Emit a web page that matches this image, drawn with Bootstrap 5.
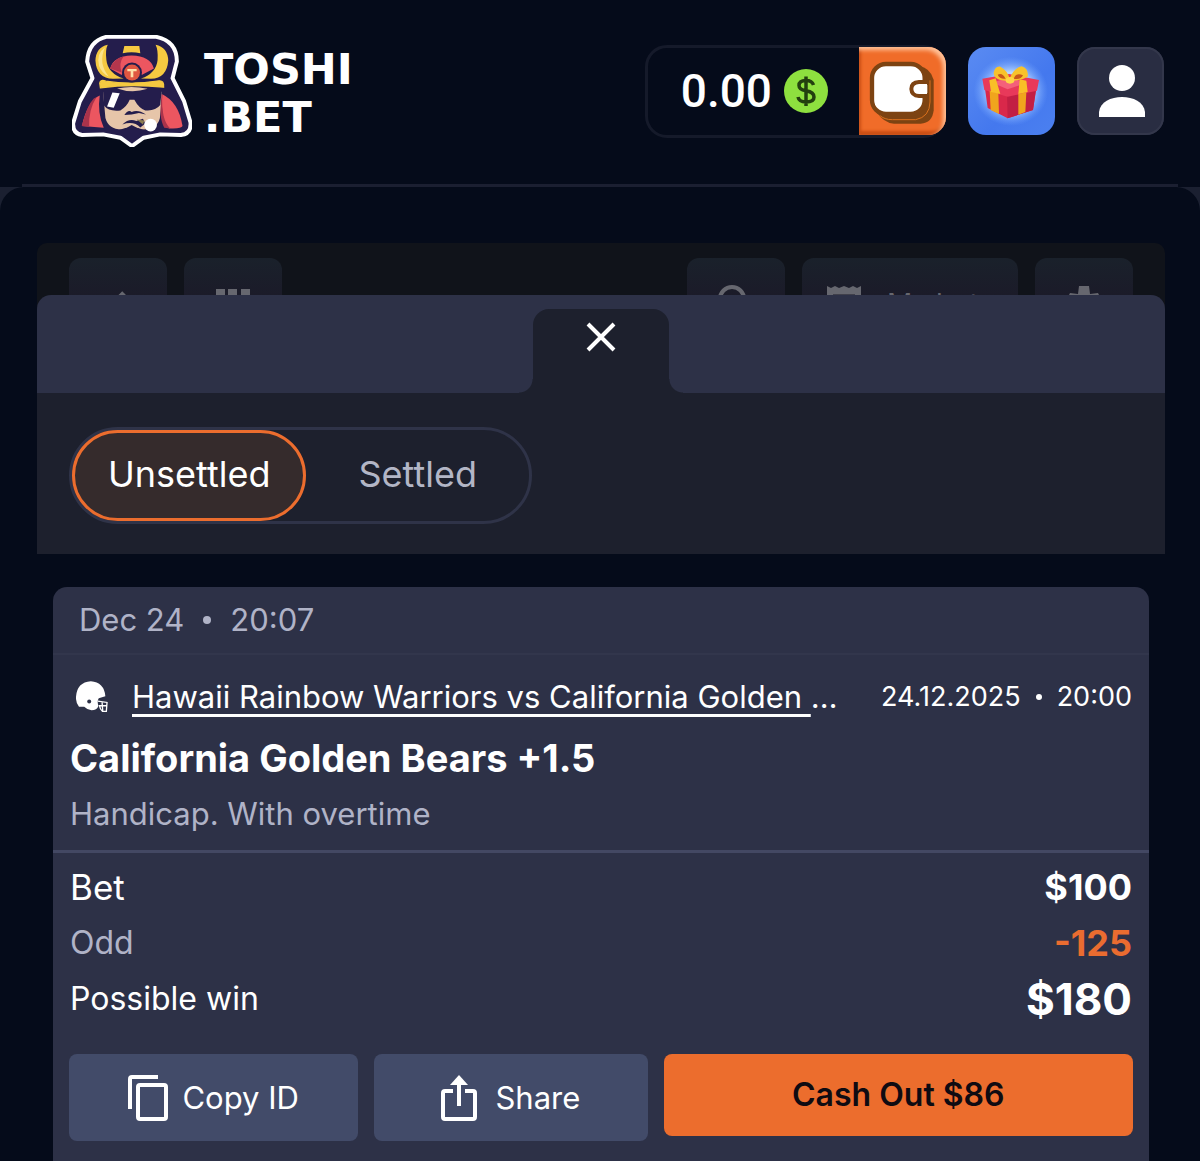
<!DOCTYPE html>
<html lang="en">
<head>
<meta charset="utf-8">
<meta name="viewport" content="width=device-width, initial-scale=1">
<title>Toshi.bet – My bets</title>
<link href="https://cdn.jsdelivr.net/npm/bootstrap@5.3.0/dist/css/bootstrap.min.css" rel="stylesheet">
<style>
  body { background: #050b1a; color: #fff; font-family: Inter, Roboto, sans-serif; font-size: 32px; line-height: 40px; }
  svg { display: block; flex: none; }
  .top-bar { height: 184px; padding: 0 36px 2px 72px; }
  .brand { gap: 12px; }
  .brand-name { font: 700 43px/48px "DejaVu Sans", sans-serif; color: #fff; padding-top: 4px; }
  .top-actions { gap: 22px; }
  .wallet-box { height: 93px; border: 3px solid #151a2a; border-radius: 22px; }
  .amount { font: 500 46px/48px Roboto, sans-serif; padding-left: 33px; }
  .coin { margin: 0 31px 0 12px; }
  .tile { width: 87px; height: 88px; padding: 0; border: 0; border-radius: 18px; display: flex; align-items: center; justify-content: center; overflow: hidden; }
  .tile-wallet { margin-right: -3px; border-radius: 0 18px 18px 0; background: #f06c29; box-shadow: inset -3px 3px 4px #ffc39a, inset 2px -4px 3px #c94d14; }
  .tile-gift { background: linear-gradient(135deg, #5a8bf2, #4478ee 60%, #4b80f0); }
  .tile-user { background: #292d42; box-shadow: inset 0 0 0 2px #33374b; }
  .head-line { height: 3px; margin: 0 22px; background: #1b1f31; }
  .page-back { background: #1b2031; }
  .page-main { background: #050b1a; border-radius: 24px 24px 0 0; padding: 56px 35px 0 37px; }
  .tool-strip { height: 68px; background: #10131a; padding: 15px 32px 0; overflow: hidden; color: #66676f; border-radius: 10px 10px 0 0; }
  .tool-set { gap: 17px; }
  .tool-btn { width: 98px; height: 76px; padding: 27px 0 0; border: 0; border-radius: 12px; background: linear-gradient(#1a212b, #1b1b29 37px); color: inherit; display: flex; align-items: flex-start; justify-content: center; }
  .tool-wide { width: 216px; gap: 26px; font-size: 28px; line-height: 32px; }
  .tool-wide span { padding-top: 3px; }
  .sheet { position: relative; margin-top: -16px; }
  .sheet-head { height: 98px; background: #2d3147; border-radius: 14px 14px 0 0; display: flex; justify-content: center; align-items: flex-end; }
  .close-tab { position: relative; width: 136px; height: 84px; border: 0; padding: 13px 0 0; background: #1d202d; border-radius: 16px 16px 0 0; display: flex; justify-content: center; }
  .close-tab::before, .close-tab::after { content: ""; position: absolute; bottom: 0; width: 14px; height: 14px; }
  .close-tab::before { right: 100%; background: radial-gradient(circle at 0 0, #2d3147 13px, #1d202d 14px); }
  .close-tab::after { left: 100%; background: radial-gradient(circle at 100% 0, #2d3147 13px, #1d202d 14px); }
  .filter-bar { background: #1d202d; padding: 34px 32px 30px; }
  .filter-group { border: 3px solid #2f3348; border-radius: 50px; height: 97px; }
  .filter-btn { border: 3px solid transparent; border-radius: 50px; background: none; color: #b3b6c6; font-size: 36px; line-height: 40px; height: 91px; padding: 0 49px 3px; }
  .filter-btn.active { background: #352b2c; border-color: #ec6d2e; color: #fff; padding: 0 33px 3px; }
  .bet-card { background: #2d3147; border-radius: 14px 14px 0 0; margin: 33px 16px 0; }
  .soft { color: #b0b3c7; }
  .bet-date { height: 68px; font-size: 31px; padding: 0 26px; border-bottom: 2px solid #32364c; gap: 19px; }
  .dot { width: 8px; height: 8px; border-radius: 50%; background: currentColor; flex: none; }
  .bet-body { font-size: 31px; padding: 22px 17px 16px; border-bottom: 3px solid #434863; }
  .event-row { padding-left: 6px; gap: 24px; }
  .event-name a { color: #fff; text-decoration: underline; text-decoration-thickness: 3px; text-underline-offset: 6px; }
  .event-time { font-size: 27px; gap: 15px; }
  .event-time .dot { width: 6px; height: 6px; }
  .pick { font-size: 38px; line-height: 48px; font-weight: 700; margin: 17px 0 12px; }
  .totals { padding: 6px 17px 0; }
  .totals dt { font-weight: 400; }
  .totals dt.stake { font-size: 35px; }
  .totals dd { margin: 0; font-weight: 700; font-size: 36px; }
  .total-line { height: 56px; }
  .orange { color: #ea6c30; }
  .totals dd.win { font-size: 44px; }
  .actions { padding: 27px 16px 20px; gap: 16px; }
  .act { border: 0; border-radius: 8px; height: 87px; font-size: 31px; color: #fff; background: #424b69; display: flex; align-items: center; justify-content: center; gap: 14px; flex: 289 1 0; padding: 0; }
  .act-share { flex-grow: 273; gap: 18px; }
  .act-cash { flex-grow: 469; background: #ec6d2d; color: #0f0b12; font-size: 32px; font-weight: 600; height: 82px; }
</style>
</head>
<body>
<header class="top-bar d-flex align-items-center justify-content-between">
  <a href="#" class="brand d-flex align-items-center text-decoration-none">
    <svg width="120" height="112" viewBox="35 35 360 337" aria-hidden="true">
      <path d="M140 40H285Q350 52 350 115L337 165L372 235L391 298Q394 332 362 336L300 334L250 344L215 369L180 344L128 334L65 336Q36 332 38 300L58 235L96 165L80 115Q84 52 140 40Z" fill="#241d4c" stroke="#fff" stroke-width="12" stroke-linejoin="round"/>
      <path d="M118 217Q82 232 64 309L130 314Q110 270 118 217Z" fill="#ec5660"/><path d="M100 226Q80 246 64 309L86 311Q84 260 108 222Z" fill="#a9334b"/>
      <path d="M306 213Q356 237 367 309Q364 318 326 316Q300 290 306 213Z" fill="#ec5660"/><path d="M306 213Q302 290 330 316L312 314Q296 285 300 213Z" fill="#a9334b"/>
      <path d="M128 206Q210 188 304 206L299 285Q290 322 240 319L214 306L190 319Q145 322 135 285Z" fill="#e6c5a9"/>
      <path d="M128 206Q120 175 214 190Q310 175 304 206L300 246Q285 265 255 262Q236 256 222 230L208 230Q200 250 180 262Q145 266 131 248Z" fill="#241d4c"/>
      <path d="M170 196Q215 186 262 197Q215 212 170 196Z" fill="#e6c5a9"/>
      <path d="M156 208L178 210L160 254L140 250Z" fill="#fff"/>
      <path d="M192 276Q204 258 214 267Q232 258 257 274L236 270Q214 276 192 276Z" fill="#241d4c"/>
      <path d="M186 304Q207 284 228 294L248 287L255 301L240 313Q220 292 186 304Z" fill="#241d4c"/>
      <path d="M229 289L252 292L248 304Z" fill="#8b7d50"/>
      <path d="M176 321Q214 306 252 321L215 354Z" fill="#241d4c"/>
      <path d="M149 136Q160 98 214 97Q270 98 281 136L244 155Q214 96 184 155Z" fill="#ec5660"/>
      <path d="M149 136Q160 106 190 99Q174 120 184 148Z" fill="#b3364d"/>
      <path d="M142 64Q106 72 105 112Q108 166 158 167L190 166Q142 150 138 110Q134 80 142 64Z" fill="#f5c941"/>
      <path d="M134 72Q106 92 116 128Q124 150 145 160Q112 120 134 72Z" fill="#fbe38b"/>
      <path d="M286 64Q323 72 324 112Q320 166 272 167L242 166Q288 150 292 110Q294 80 286 64Z" fill="#f5c941"/>
      <path d="M192 68H237L240 90Q214 84 187 90Z" fill="#f5c941"/>
      <path d="M118 180Q120 168 136 174Q212 186 296 173Q312 171 310 192Q212 181 120 194Z" fill="#f5c941" stroke="#f5c941" stroke-width="4"/>
      <circle cx="215" cy="148" r="30" fill="#241d4c"/><circle cx="215" cy="148" r="24" fill="#e05741"/><path d="M201 137H229V144H219V162H211V144H201Z" fill="#ffe0aa"/>
      <circle cx="271" cy="306" r="19" fill="#fff"/>
    </svg>
    <span class="brand-name">TOSHI<br>.BET</span>
  </a>
  <div class="top-actions d-flex align-items-center">
    <div class="wallet-box d-flex align-items-center">
      <span class="amount">0.00</span>
      <svg class="coin" width="44" height="44" viewBox="0 0 44 44" aria-label="US dollars"><circle cx="22" cy="22" r="22" fill="#8ee03f"/><path d="M29.500 16Q28 11.500 22 11.500Q15 11.500 15 16.500Q15 20.500 22 21.800Q30 23.200 30 28Q30 33 22 33Q15 33 14 28M22 7.500V37" fill="none" stroke="#23400f" stroke-width="3.500"/></svg>
      <button class="tile tile-wallet" aria-label="Wallet">
        <svg width="87" height="88" viewBox="0 0 261 264">
          <path d="M75 58H180Q213 62 224 98V190Q220 228 185 230H105Q75 228 52 194Z" fill="#7d4312"/>
          <path d="M62 205Q76 218 100 218H170Q212 210 213 165V100" fill="none" stroke="#d9701d" stroke-width="3"/>
          <rect x="39" y="51" width="158" height="150" rx="42" fill="#fff" stroke="#7d4312" stroke-width="13"/>
          <path d="M204 105H180Q157 106 157 126Q158 146 180 147H204" fill="#fff" stroke="#7d4312" stroke-width="12"/>
          <path d="M176 114H205V138H176Q166 126 176 114Z" fill="#fff"/>
        </svg>
      </button>
    </div>
    <button class="tile tile-gift" aria-label="Gifts">
      <svg width="87" height="88" viewBox="39 51 261 264">
        <defs><radialGradient id="glow"><stop offset=".55" stop-color="#b7d6ff"/><stop offset="1" stop-color="#6fa3ff" stop-opacity="0"/></radialGradient></defs>
        <ellipse cx="167" cy="184" rx="112" ry="104" fill="url(#glow)"/>
        <path d="M90 176L156 194L244 176L234 240L158 265L98 234Z" fill="#d9284a"/>
        <path d="M156 190L244 170L234 240L158 265Z" fill="#c21f43"/>
        <path d="M82 146L162 132L252 150L246 182L158 200L88 180Z" fill="#e8395a"/>
        <path d="M112 158L162 142L216 158L158 178Z" fill="#f4607a"/>
        <path d="M104 182L130 190L132 252L107 240ZM190 192L214 187L211 246L190 254Z" fill="#f0a51d"/>
        <path d="M103 151L122 145L136 192L108 186ZM194 148L214 152L218 186L190 192Z" fill="#f9bf27"/>
        <path d="M160 152Q116 152 116 128Q120 108 136 110Q158 122 164 146Q176 114 200 109Q222 116 218 140Q200 152 170 152Z" fill="#f8c22c"/>
        <path d="M128 134Q142 126 152 146Q134 148 128 134ZM176 146Q184 126 204 136Q198 150 176 146Z" fill="#c9571a"/>
        <ellipse cx="165" cy="151" rx="13" ry="10" fill="#ffd447"/>
      </svg>
    </button>
    <button class="tile tile-user" aria-label="Account">
      <svg width="48" height="52" viewBox="0 0 48 52"><circle cx="25" cy="13" r="13" fill="#fff"/><path d="M2 52V47C4 27 46 27 48 47V52Z" fill="#fff"/></svg>
    </button>
  </div>
</header>
<div class="head-line"></div>
<div class="page-back">
<main class="page-main">
  <div class="tool-strip d-flex justify-content-between">
    <div class="tool-set d-flex">
      <button class="tool-btn" aria-label="Back"><svg width="36" height="32" viewBox="0 0 36 32"><path d="M24 8L12 20L24 32" fill="none" stroke="currentColor" stroke-width="5"/></svg></button>
      <button class="tool-btn" aria-label="Menu"><svg width="34" height="34" viewBox="0 0 34 34" fill="currentColor"><path d="M0 4H9V13H0ZM12 4H21V13H12ZM25 4H34V13H25ZM0 17H9V26H0ZM12 17H21V26H12ZM25 17H34V26H25Z"/></svg></button>
    </div>
    <div class="tool-set d-flex">
      <button class="tool-btn" aria-label="Search"><svg width="36" height="36" viewBox="0 0 36 36"><path d="M22 22L33 33" stroke="currentColor" stroke-width="4"/><circle cx="14" cy="14" r="12" fill="none" stroke="currentColor" stroke-width="4"/></svg></button>
      <button class="tool-btn tool-wide"><svg width="34" height="36" viewBox="0 0 34 36"><path d="M0 1L4 3L8 1L12 3L17 1L22 3L26 1L30 3L34 1V36H0Z" fill="currentColor"/><path d="M6 11H28" stroke="#1b1b29" stroke-width="3"/></svg><span>My bets</span></button>
      <button class="tool-btn" aria-label="Settings"><svg width="36" height="36" viewBox="0 0 36 36" fill="currentColor"><path d="M13 1H23L24 9L32 8L36 16L30 20L34 28L24 36H12L2 28L6 20L0 16L4 8L12 9Z"/></svg></button>
    </div>
  </div>
  <section class="sheet">
    <div class="sheet-head">
      <button class="close-tab" aria-label="Close"><svg width="30" height="30" viewBox="0 0 30 30"><path d="M2 2L28 28M28 2L2 28" stroke="#fff" stroke-width="4"/></svg></button>
    </div>
    <div class="filter-bar d-flex">
      <div class="filter-group d-flex" role="group" aria-label="Bet status">
        <button class="filter-btn active" aria-pressed="true">Unsettled</button>
        <button class="filter-btn" aria-pressed="false">Settled</button>
      </div>
    </div>
    <article class="bet-card">
      <div class="bet-date soft d-flex align-items-center"><span>Dec 24</span><span class="dot"></span><span>20:07</span></div>
      <div class="bet-body">
        <div class="event-row d-flex align-items-center">
          <svg width="32" height="32" viewBox="107 303 97 95" aria-hidden="true"><path d="M116 380Q106 368 107 350Q110 306 152 303Q192 306 196 348L176 354Q170 362 175 378Q170 391 154 391Q142 390 132 380Z" fill="#fff"/><circle cx="147" cy="364" r="6" fill="#2d3147"/><path d="M173 363L201 367L199 394H187Q180 388 178 377H200M186 366L188 393" fill="none" stroke="#fff" stroke-width="4"/></svg>
          <div class="event-name text-truncate flex-grow-1"><a href="#">Hawaii Rainbow Warriors vs California Golden Bears</a></div>
          <div class="event-time d-flex align-items-center flex-shrink-0"><span>24.12.2025</span><span class="dot"></span><span>20:00</span></div>
        </div>
        <h2 class="pick">California Golden Bears +1.5</h2>
        <div class="soft">Handicap. With overtime</div>
      </div>
      <dl class="totals mb-0">
        <div class="total-line d-flex align-items-center justify-content-between"><dt class="stake">Bet</dt><dd>$100</dd></div>
        <div class="total-line d-flex align-items-center justify-content-between"><dt class="soft">Odd</dt><dd class="orange">-125</dd></div>
        <div class="total-line d-flex align-items-center justify-content-between"><dt>Possible win</dt><dd class="win">$180</dd></div>
      </dl>
      <div class="actions d-flex">
        <button class="act"><svg width="40" height="46" viewBox="0 0 40 46" fill="none" stroke="#fff" stroke-width="4"><path d="M2 34V4Q2 2 4 2H30"/><rect x="10" y="10" width="28" height="34" rx="2"/></svg>Copy ID</button>
        <button class="act act-share"><svg width="36" height="46" viewBox="0 0 36 46" fill="none" stroke="#fff" stroke-width="4"><path d="M12 16H4Q2 16 2 18V42Q2 44 4 44H32Q34 44 34 42V18Q34 16 32 16H24M18 31V6"/><path d="M9 10L18 0L27 10Z" fill="#fff" stroke="none"/></svg>Share</button>
        <button class="act act-cash">Cash Out $86</button>
      </div>
    </article>
  </section>
</main>
</div>
<script src="https://cdn.jsdelivr.net/npm/bootstrap@5.3.0/dist/js/bootstrap.bundle.min.js"></script>
</body>
</html>
